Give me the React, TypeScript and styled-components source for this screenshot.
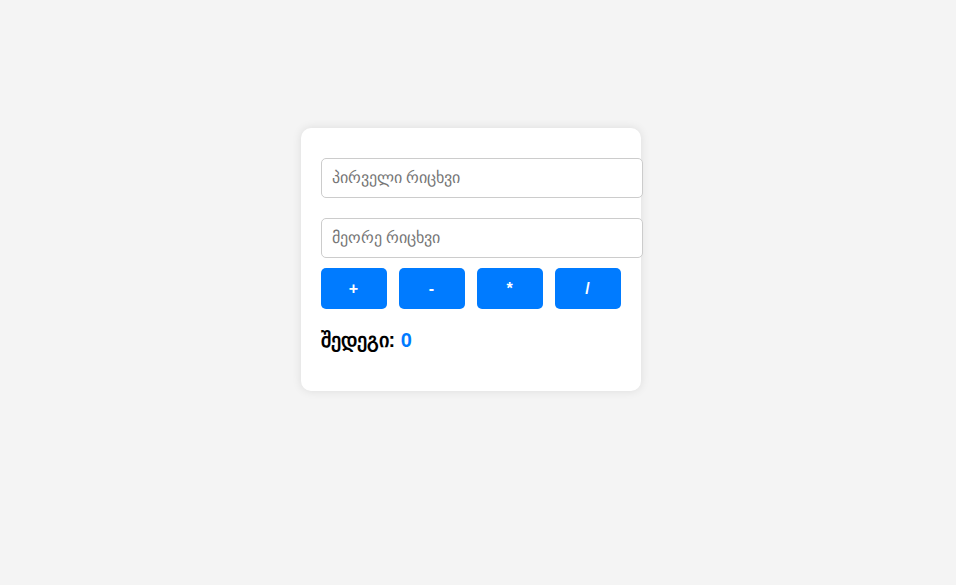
import React, { useState } from "react";
import styled, { createGlobalStyle } from "styled-components";

const Global = createGlobalStyle`
  html, body { margin: 0; padding: 0; background: #f4f4f4; }
  body { font-family: "Liberation Sans", Arial, sans-serif; }
`;

const Page = styled.div`
  display: flex;
  justify-content: center;
  align-items: flex-start;
  padding: 128px 15px 0 0;
  min-height: 585px;
  box-sizing: border-box;
`;

const Card = styled.div`
  width: 340px;
  box-sizing: border-box;
  background: #ffffff;
  border-radius: 10px;
  padding: 20px;
  box-shadow: 0 0 10px rgba(0, 0, 0, 0.1);
`;

const Fields = styled.div`
  display: flex;
  flex-direction: column;
  gap: 20px;
  margin: 10px 0;
`;

const Input = styled.input`
  display: block;
  width: 300px;
  box-sizing: content-box;
  margin: 0;
  padding: 10px;
  height: 18px;
  font-size: 16px;
  font-family: "Liberation Sans", Arial, sans-serif;
  border: 1px solid #ccc;
  border-radius: 5px;
  outline: none;
  &::placeholder { color: #757575; }
`;

const Buttons = styled.div`
  display: flex;
  gap: 12px;
`;

const OpButton = styled.button`
  width: 66px;
  height: 41px;
  border: none;
  border-radius: 5px;
  background: #007bff;
  color: #fff;
  font-family: "Liberation Sans", Arial, sans-serif;
  font-weight: bold;
  font-size: 16px;
  cursor: pointer;
`;

const Result = styled.h3`
  margin: 20px 0 19px;
  font-size: 20px;
  line-height: 23px;
  font-weight: bold;
  font-family: "Liberation Sans", Arial, sans-serif;
  color: #000;
`;

const Value = styled.span`
  color: #007bff;
`;

export default function App() {
  const [a, setA] = useState("");
  const [b, setB] = useState("");
  const [res, setRes] = useState<number | string>(0);
  const calc = (op: string) => {
    const x = parseFloat(a), y = parseFloat(b);
    if (isNaN(x) || isNaN(y)) return;
    if (op === "+") setRes(x + y);
    if (op === "-") setRes(x - y);
    if (op === "*") setRes(x * y);
    if (op === "/") setRes(x / y);
  };
  return (
    <>
      <Global />
      <Page>
        <Card>
          <Fields>
            <Input placeholder="პირველი რიცხვი" value={a} onChange={(e) => setA(e.target.value)} />
            <Input placeholder="მეორე რიცხვი" value={b} onChange={(e) => setB(e.target.value)} />
          </Fields>
          <Buttons>
            {["+", "-", "*", "/"].map((o) => (
              <OpButton key={o} onClick={() => calc(o)}>{o}</OpButton>
            ))}
          </Buttons>
          <Result>
            შედეგი: <Value>{res}</Value>
          </Result>
        </Card>
      </Page>
    </>
  );
}
